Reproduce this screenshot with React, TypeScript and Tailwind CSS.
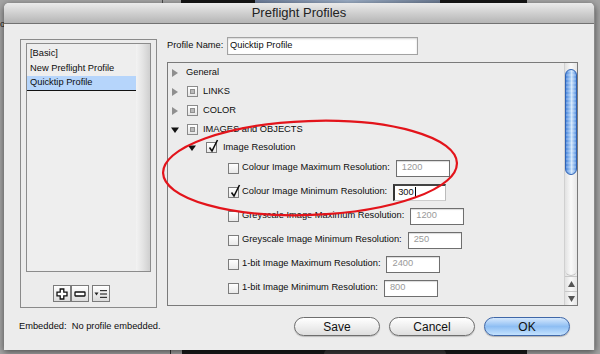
import type { ReactNode } from "react";

const FONT = "font-['Liberation_Sans',Arial,sans-serif]";

function TriRight() {
  return (
    <svg width="8" height="10" viewBox="0 0 8 10" className="shrink-0">
      <polygon points="1,1 7,5 1,9" fill="#8f8f8f" />
    </svg>
  );
}

function TriDown() {
  return (
    <svg width="8" height="8" viewBox="0 0 8 8" className="shrink-0">
      <polygon points="0,1.5 8,1.5 4,7" fill="#111" />
    </svg>
  );
}

function MixedBox() {
  return (
    <div className="flex h-[11px] w-[11px] shrink-0 items-center justify-center border border-[#8a8a8a] bg-gradient-to-b from-[#ffffff] to-[#e6e6e6]">
      <div className="h-[5px] w-[5px] border border-[#8f8f8f] bg-[#b9b9b9]" />
    </div>
  );
}

function CheckBox({ checked }: { checked?: boolean }) {
  return (
    <div className="relative h-[11px] w-[11px] shrink-0 border border-[#7c7c7c] bg-gradient-to-b from-[#ffffff] to-[#e9e9e9]">
      {checked && (
        <svg
          width="12"
          height="14"
          viewBox="0 0 12 14"
          className="absolute left-[1px] top-[-4px] overflow-visible"
        >
          <path d="M1.5 8.5 L4 12 L9.5 1" fill="none" stroke="#111" strokeWidth="1.6" />
        </svg>
      )}
    </div>
  );
}

function TreeRow({ children }: { children: ReactNode }) {
  return <div className="flex h-[19px] items-center">{children}</div>;
}

function Setting({
  label,
  value,
  checked,
  focused,
}: {
  label: string;
  value: string;
  checked?: boolean;
  focused?: boolean;
}) {
  return (
    <div className="flex h-[24px] items-center pl-[60px]">
      <CheckBox checked={checked} />
      <span className="ml-[3px] whitespace-nowrap">{label}</span>
      <div
        className={
          focused
            ? "ml-[6px] flex h-[17px] w-[53px] items-center border-l-2 border-t-2 border-r border-b border-l-[#333] border-t-[#444] border-r-[#bbb] border-b-[#ccc] bg-white pl-[3px] text-[#111]"
            : "ml-[6px] flex h-[17px] w-[54px] items-center border border-[#6f6f6f] bg-white pl-[5px] text-[#9a9a9a] shadow-[inset_0_1px_1px_rgba(0,0,0,0.15)]"
        }
      >
        {value}
        {focused && <span className="ml-px h-[11px] w-px bg-black" />}
      </div>
    </div>
  );
}

function AquaButton({ label, primary }: { label: string; primary?: boolean }) {
  return (
    <div
      className={
        primary
          ? "flex h-[19px] w-[86px] items-center justify-center rounded-full border border-[#3f67a8] bg-gradient-to-b from-[#d6e8fc] via-[#8ebef3] to-[#c4e2fe] text-[12px] text-[#111] shadow-[0_1px_1px_rgba(0,0,0,0.25)]"
          : "flex h-[19px] w-[86px] items-center justify-center rounded-full border border-[#6e6e6e] bg-gradient-to-b from-[#ffffff] via-[#efefef] to-[#dedede] text-[12px] text-[#111] shadow-[0_1px_1px_rgba(0,0,0,0.2)]"
      }
    >
      {label}
    </div>
  );
}

function SmallButton({ children }: { children: ReactNode }) {
  return (
    <div className="flex h-[17px] w-[18px] items-center justify-center border border-[#7b7b7b] bg-gradient-to-b from-[#ffffff] to-[#dcdcdc]">
      {children}
    </div>
  );
}

function LeftPanel() {
  return (
    <div className="mt-[15px] flex h-[269px] w-[137px] shrink-0 flex-col border border-[#8a8a8a]">
      <div className="ml-[5px] mt-[3px] flex h-[229px] w-[125px] border border-[#8c8c8c] bg-[#eeeeee]">
        <div className="flex flex-1 flex-col pt-[2px]">
          <div className="flex h-[15px] items-center pl-[3px]">[Basic]</div>
          <div className="flex h-[15px] items-center pl-[3px]">New Preflight Profile</div>
          <div className="flex h-[15px] items-center border-b border-[#111] bg-[#b6d5fb] pl-[3px]">
            Quicktip Profile
          </div>
        </div>
        <div className="w-[14px] bg-gradient-to-r from-[#f3f3f3] via-[#e3e3e3] to-[#cfcfcf]" />
      </div>
      <div className="ml-[32px] mt-[13px] flex">
        <SmallButton>
          <svg width="12" height="12" viewBox="0 0 12 12">
            <path
              d="M4.2 1 H7.8 V4.2 H11 V7.8 H7.8 V11 H4.2 V7.8 H1 V4.2 H4.2 Z"
              fill="#fff"
              stroke="#111"
              strokeWidth="1.3"
            />
          </svg>
        </SmallButton>
        <SmallButton>
          <svg width="12" height="8" viewBox="0 0 12 8">
            <rect x="1" y="2" width="10" height="4" rx="0.5" fill="#fff" stroke="#111" strokeWidth="1.3" />
          </svg>
        </SmallButton>
        <div className="ml-[3px]">
          <SmallButton>
            <svg width="14" height="10" viewBox="0 0 14 10">
              <polygon points="0.5,3.5 4.5,3.5 2.5,6.5" fill="#222" />
              <rect x="6" y="1" width="7" height="1.2" fill="#333" />
              <rect x="6" y="4.4" width="7" height="1.2" fill="#333" />
              <rect x="6" y="7.8" width="7" height="1.2" fill="#333" />
            </svg>
          </SmallButton>
        </div>
      </div>
    </div>
  );
}

function ScrollBar() {
  return (
    <div className="flex w-[13px] flex-col border-l border-[#d0d0d0] bg-gradient-to-r from-[#e2e2e2] via-[#f9f9f9] to-[#e6e6e6]">
      <div className="mx-auto mt-[6px] h-[106px] w-[12px] rounded-full border border-[#2f63b5] bg-[repeating-linear-gradient(180deg,rgba(255,255,255,0.18)_0px,rgba(255,255,255,0.18)_2px,rgba(0,0,0,0)_2px,rgba(0,0,0,0)_4px),linear-gradient(90deg,#4a86dc,#a8cdf6_45%,#cfe5fc_55%,#5e97e2)]" />
      <div className="flex-1 rounded-b-full border-b border-[#c4c4c4]" />
      <div className="flex h-[15px] items-center justify-center border-t border-[#c7c7c7]">
        <svg width="7" height="6" viewBox="0 0 7 6">
          <polygon points="3.5,0 7,6 0,6" fill="#555" />
        </svg>
      </div>
      <div className="flex h-[14px] items-center justify-center border-t border-[#c7c7c7]">
        <svg width="7" height="6" viewBox="0 0 7 6">
          <polygon points="0,0 7,0 3.5,6" fill="#555" />
        </svg>
      </div>
    </div>
  );
}

function RightPanel() {
  return (
    <div className="ml-[10px] mt-[13px] flex w-[414px] flex-col">
      <div className="flex h-[18px] items-center">
        <span className="w-[60px]">Profile Name:</span>
        <div className="flex h-[18px] w-[191px] items-center border border-[#a2a2a2] bg-white pl-[2px] shadow-[inset_0_1px_2px_rgba(0,0,0,0.18)]">
          Quicktip Profile
        </div>
      </div>
      <div className="mt-[7px] flex h-[244px] border border-[#7a7a7a] bg-[#ececec]">
        <div className="flex flex-1 flex-col">
          <TreeRow>
            <div className="ml-[3px] flex items-center">
              <TriRight />
              <span className="ml-[7px]">General</span>
            </div>
          </TreeRow>
          <TreeRow>
            <div className="ml-[3px] flex items-center">
              <TriRight />
              <div className="ml-[8px]">
                <MixedBox />
              </div>
              <span className="ml-[5px]">LINKS</span>
            </div>
          </TreeRow>
          <TreeRow>
            <div className="ml-[3px] flex items-center">
              <TriRight />
              <div className="ml-[8px]">
                <MixedBox />
              </div>
              <span className="ml-[5px]">COLOR</span>
            </div>
          </TreeRow>
          <TreeRow>
            <div className="ml-[3px] flex items-center">
              <TriDown />
              <div className="ml-[8px]">
                <MixedBox />
              </div>
              <span className="ml-[5px]">IMAGES and OBJECTS</span>
            </div>
          </TreeRow>
          <div className="flex h-[17px] items-center pl-[20px]">
            <TriDown />
            <div className="ml-[10px]">
              <CheckBox checked />
            </div>
            <span className="ml-[6px]">Image Resolution</span>
          </div>
          <Setting label="Colour Image Maximum Resolution:" value="1200" />
          <Setting label="Colour Image Minimum Resolution:" value="300" checked focused />
          <Setting label="Greyscale Image Maximum Resolution:" value="1200" />
          <Setting label="Greyscale Image Minimum Resolution:" value="250" />
          <Setting label="1-bit Image Maximum Resolution:" value="2400" />
          <Setting label="1-bit Image Minimum Resolution:" value="800" />
        </div>
        <ScrollBar />
      </div>
    </div>
  );
}

export default function App() {
  return (
    <div className={`relative h-[354px] w-[600px] overflow-hidden bg-[#a4a4a4] text-[9.3px] text-[#0d0d0d] ${FONT}`}>
      {/* desktop behind the dialog */}
      <div className="absolute left-[162px] top-0 h-[8px] w-px bg-[#4a4a4a]" />
      <div className="absolute left-[181px] top-0 h-[8px] w-[346px] bg-[#151515]" />
      <div className="absolute left-[255px] top-0 h-[4px] w-[185px] bg-gradient-to-r from-[#6f7f9c] via-[#9eb0c8] to-[#6e7d95]" />
      <div className="absolute bottom-0 left-[170px] h-[8px] w-px bg-[#333]" />
      <div className="absolute bottom-0 left-[182px] h-[8px] w-[345px] bg-[#1b1b1b]" />
      <div className="absolute bottom-0 left-[324px] h-[5px] w-[122px] rounded-t-full bg-[#3c3a3a]" />
      <div className="absolute left-0 top-[18px] text-[9px] text-[#222]">ol</div>

      <div className="absolute left-[4px] top-[3px] flex h-[347px] w-[591px] flex-col overflow-hidden rounded-t-[5px] border-r border-[#8a8a8a] bg-[#ececec] shadow-[0_2px_7px_rgba(0,0,0,0.55)]">
        <div className="flex h-[21px] shrink-0 items-center justify-center border-b border-[#727272] bg-gradient-to-b from-[#ebebeb] to-[#b5b5b5] text-[13px] text-[#222]">
          Preflight Profiles
        </div>
        <div className="flex flex-1 flex-col px-[16px]">
          <div className="flex">
            <LeftPanel />
            <RightPanel />
          </div>
          <div className="mt-[9px] flex h-[19px] items-center">
            <span className="-ml-[1px] whitespace-pre">Embedded:  No profile embedded.</span>
            <div className="ml-auto mr-[8px] flex gap-[9px]">
              <AquaButton label="Save" />
              <AquaButton label="Cancel" />
              <AquaButton label="OK" primary />
            </div>
          </div>
        </div>
      </div>

      {/* red annotation */}
      <svg className="pointer-events-none absolute left-0 top-0" width="600" height="354">
        <ellipse
          cx="310"
          cy="168"
          rx="147"
          ry="47"
          transform="rotate(-2 310 168)"
          fill="none"
          stroke="#e3141b"
          strokeWidth="2.2"
        />
      </svg>
    </div>
  );
}
